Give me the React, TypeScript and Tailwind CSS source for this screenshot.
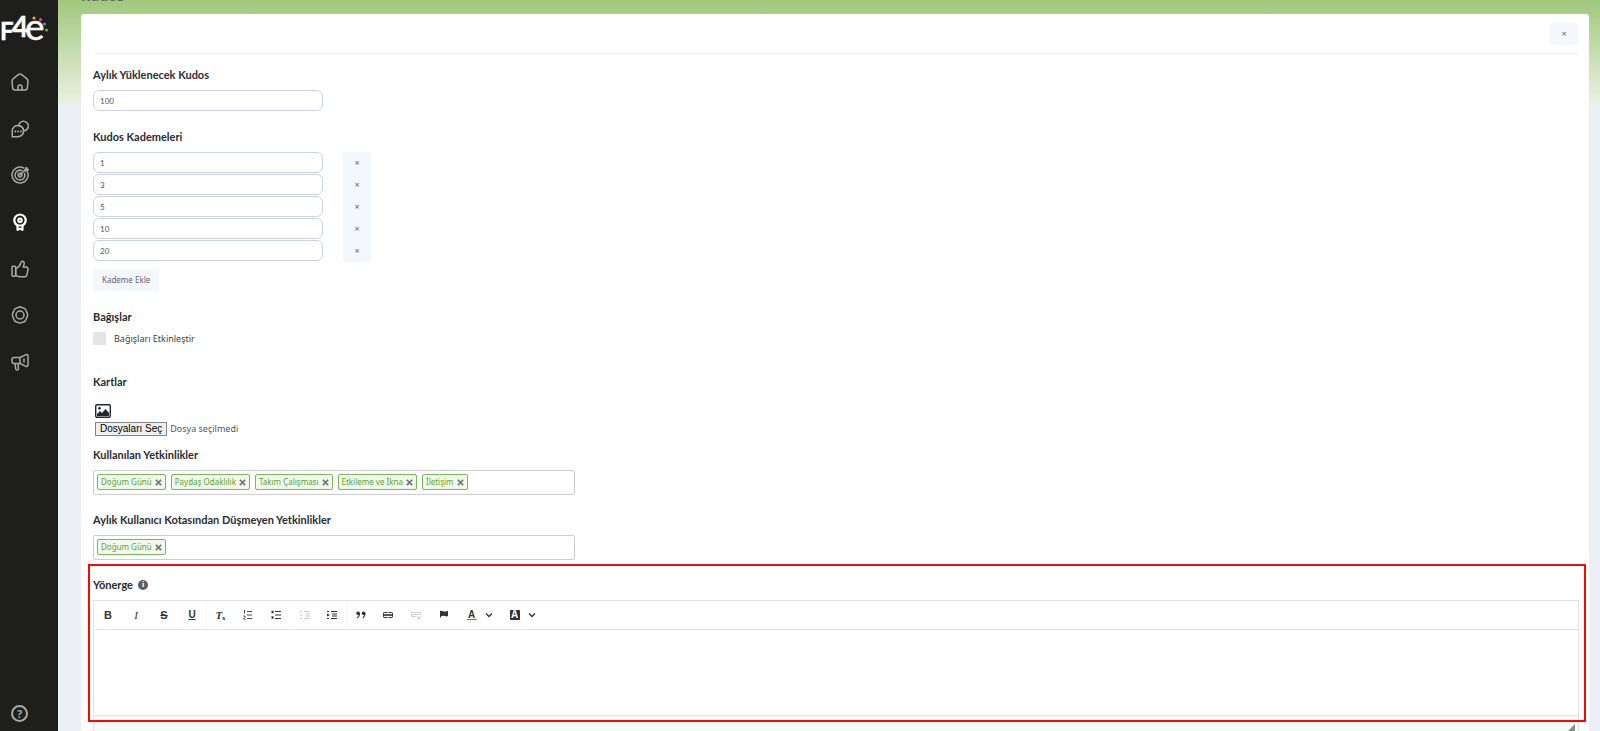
import { useState } from 'react'
import type { ReactNode } from 'react'

type IconProps = { children: ReactNode; className?: string }

function NavIcon({ children }: IconProps) {
  return (
    <svg
      viewBox="0 0 18 18"
      className="size-[18px]"
      fill="none"
      stroke="currentColor"
      strokeWidth="1.5"
      strokeLinecap="round"
      strokeLinejoin="round"
    >
      {children}
    </svg>
  )
}

function ToolIcon({ children, className = '' }: IconProps) {
  return (
    <svg viewBox="0 0 10 10" className={`size-[10px] ${className}`} fill="none" stroke="currentColor" strokeWidth="1">
      {children}
    </svg>
  )
}

const navItems = [
  {
    label: 'Ana Sayfa',
    icon: (
      <>
        <path d="M1 8.200C1 7 1.400 6.300 2.300 5.600L7.300 1.700a2.800 2.800 0 0 1 3.400 0l5 3.900C16.600 6.300 17 7 17 8.200L16.400 14.500A2.500 2.500 0 0 1 14 17H4a2.500 2.500 0 0 1-2.400-2.500Z" />
        <path d="M7 17v-3a2 2 0 0 1 4 0v3" />
      </>
    ),
  },
  {
    label: 'Mesajlar',
    icon: (
      <>
        <path d="M1.200 16.800v-5.300a5.700 5.700 0 1 1 5.700 5.300Z" />
        <path d="M7.800 4.600a4.900 4.900 0 1 1 6.200 6.200L12.800 10.600A5.900 5.900 0 0 0 7.800 5.800" />
        <path d="M4.200 11.500h.1M7 11.500h.1M9.800 11.500h.1" strokeWidth="1.800" />
      </>
    ),
  },
  {
    label: 'Hedefler',
    icon: (
      <>
        <path d="M12.800 2A8 8 0 1 0 16.200 5.500" />
        <path d="M11 4.600A4.900 4.900 0 1 0 13.500 7.200" />
        <path d="M9.600 7.200A1.900 1.900 0 1 0 10.900 8.500M9 9l5-5 1.500-2.500.4 1.600 1.600.4L14.500 5" />
      </>
    ),
  },
  {
    label: 'Kudos',
    active: true,
    icon: (
      <g strokeWidth="2.200">
        <path d="M6.500 12.300A5.700 5.700 0 1 1 11.500 12.300" />
        <circle cx="9" cy="7.200" r="1.700" />
        <path d="M6.500 12.500v4.300L9 15.800l2.500 1v-4.300Z" />
      </g>
    ),
  },
  {
    label: 'Beğeniler',
    icon: (
      <>
        <rect x="1" y="6.300" width="3.700" height="10" rx="1" />
        <path d="M4.700 8.500C7.500 7.500 9 5.500 9.700 3.300c.5-2.300 3-2.700 3.500-.5.200 1.500-.6 3-1 4.200H15c1.500 0 2.200 1 2 2.300l-1 5c-.3 1.500-1 2.500-2.500 2.500H9c-1.500 0-2.500-.5-4.300-1.500Z" />
      </>
    ),
  },
  {
    label: 'Ayarlar',
    icon: (
      <>
        <path d="M7.200 1.500c1-.7 2.600-.7 3.600 0l1.700.6c1.300.2 2.200 1.100 2.500 2.400l.8 1.700c1 1.800 1 3.800 0 5.600L15 13.500c-.3 1.300-1.200 2.200-2.500 2.400l-1.700.6c-1 .7-2.600.7-3.600 0l-1.700-.6C4.200 15.700 3.300 14.800 3 13.500l-.8-1.700c-1-1.800-1-3.800 0-5.600L3 4.500c.3-1.300 1.200-2.200 2.500-2.400Z" />
        <circle cx="9" cy="9" r="4" />
      </>
    ),
  },
  {
    label: 'Duyurular',
    icon: (
      <>
        <path d="M9 4.500H3a2 2 0 0 0-2 2v2a2 2 0 0 0 2 2h6ZM9 4.500l5.500-2.700c1.600-.6 2.500 0 2.500 1.200v9c0 1.200-1 1.700-2.500 1.200L9 10.500" />
        <path d="m4 10.500.7 5.300c.3 1.600 3 1.400 2.800-.4L7 10.500M13 6v3" />
      </>
    ),
  },
]

const levels = ['1', '3', '5', '10', '20']

const toolbar = [
  { label: 'Kalın', icon: <span className="text-[11px] font-black">B</span> },
  { label: 'İtalik', icon: <span className="font-['Liberation_Serif',serif] text-[11px] italic">I</span> },
  { label: 'Üstü Çizgili', icon: <span className="text-[11px] font-bold line-through">S</span> },
  { label: 'Altı Çizgili', icon: <span className="text-[10px] font-bold underline">U</span> },
  {
    label: 'Biçimi Kaldır',
    divider: true,
    icon: (
      <span className="font-['Liberation_Serif',serif] text-[11px] font-bold italic">
        T<sub className="text-[7px] not-italic">x</sub>
      </span>
    ),
  },
  {
    label: 'Numaralı Liste',
    icon: (
      <ToolIcon>
        <path d="M4 1.500h5M4 5h5M4 8.500h5M1.500 0v3.500M.5 6h1.500v1.500L.5 9h2" strokeWidth=".9" />
      </ToolIcon>
    ),
  },
  {
    label: 'Simgeli Liste',
    icon: (
      <ToolIcon>
        <path d="M4 1.500h6M4 5h6M4 8.500h6" />
        <path d="M.5 2h2M.5 7.500h2" strokeWidth="2.500" />
      </ToolIcon>
    ),
  },
  {
    label: 'Girintiyi Azalt',
    divider: true,
    disabled: true,
    icon: (
      <ToolIcon>
        <path d="M0 1.500h2M4 1.500h6M5 4h5M5 6h5M0 8.500h2M4 8.500h6M0 5h3" />
      </ToolIcon>
    ),
  },
  {
    label: 'Girintiyi Artır',
    icon: (
      <ToolIcon>
        <path d="M0 1.500h2M4 1.500h6M5 4h5M5 6h5M0 8.500h2M4 8.500h6" />
        <path d="m0 3.500 3 1.500-3 1.500Z" fill="currentColor" stroke="none" />
      </ToolIcon>
    ),
  },
  {
    label: 'Alıntı',
    divider: true,
    icon: (
      <ToolIcon>
        <path d="M2 3.200h.1M7.500 3.200h.1" strokeWidth="3.600" strokeLinecap="round" />
        <path d="M3.500 3c0 2.500-.7 4-2.200 5M9 3c0 2.500-.7 4-2.200 5" strokeWidth="1.300" />
      </ToolIcon>
    ),
  },
  {
    label: 'Bağlantı',
    icon: (
      <ToolIcon>
        <path d="M4.500 2.500H1.200a.7.7 0 0 0-.7.700v3.600a.7.7 0 0 0 .7.700h3.300M5.500 2.500h3.300a.7.7 0 0 1 .7.700v3.600a.7.7 0 0 1-.7.700H5.500" />
        <path d="M1 5h8" strokeWidth="1.600" />
      </ToolIcon>
    ),
  },
  {
    label: 'Bağlantıyı Kaldır',
    disabled: true,
    icon: (
      <ToolIcon>
        <path d="M4.500 2.500H.5v4h4M5.500 2.500h4v3M2 4.500h6M6.500 6.500l3 3m0-3-3 3" />
      </ToolIcon>
    ),
  },
  {
    label: 'Çapa',
    icon: (
      <ToolIcon>
        <path d="M1 7.500V1c2-1 3 .8 5 .6C7.200 1.500 8 1 9 1v5c-2 1-3-.3-4.500-.3C3.300 5.700 2.500 6 2 6.200v1.300Z" fill="currentColor" stroke="none" />
      </ToolIcon>
    ),
  },
]

function Chevron() {
  return (
    <svg viewBox="0 0 8 8" className="size-2" fill="none" stroke="currentColor" strokeWidth="1.300">
      <path d="m1 2.500 3 3 3-3" />
    </svg>
  )
}

function Heading({ children, htmlFor }: { children: ReactNode; htmlFor?: string }) {
  const className = 'block font-[Lato,sans-serif] text-[11px] leading-4 font-bold text-[#2b2c33]'
  return htmlFor ? (
    <label htmlFor={htmlFor} className={className}>
      {children}
    </label>
  ) : (
    <h2 className={className}>{children}</h2>
  )
}

function TagBox({ id, initial }: { id: string; initial: string[] }) {
  const [tags, setTags] = useState(initial)
  return (
    <div className="flex h-[25px] w-[482px] max-w-full items-start gap-[5px] rounded-xs border border-[#ccc] px-[3px] pt-[3px]">
      {tags.map((tag) => (
        <span
          key={tag}
          className="flex h-4 shrink-0 items-center gap-[3px] rounded-xs border border-[#7db55a] bg-[#f1f8ec] px-[3px] text-[8px] leading-3 text-[#5ba62f]"
        >
          {tag}
          <button
            type="button"
            aria-label={`${tag} kaldır`}
            onClick={() => setTags(tags.filter((t) => t !== tag))}
            className="text-[#777]"
          >
            <svg viewBox="0 0 8 8" className="size-[7px]" stroke="currentColor" strokeWidth="2">
              <path d="m1 1 6 6M7 1 1 7" />
            </svg>
          </button>
        </span>
      ))}
      <input id={id} className="min-w-0 flex-1 text-[8px] outline-none" />
    </div>
  )
}

function Sidebar() {
  return (
    <nav className="flex w-[58px] shrink-0 flex-col bg-[#1e1e1c] text-[#a9a9a8]">
      <a href="#" aria-label="F4e" className="block h-11">
        <svg viewBox="0 0 50 44" className="h-11 w-[50px] overflow-visible">
          <g fill="#fff" fontFamily="Lato" stroke="#fff" strokeWidth=".4">
            <text x="0" y="40" fontSize="24" fontWeight="700">F</text>
            <text x="12" y="37" fontSize="28" fontWeight="700">4</text>
            <text x="25" y="40" fontSize="37">e</text>
          </g>
          <circle cx="34" cy="18" r="1.500" fill="#f5b52e" />
          <circle cx="40.500" cy="19.500" r="1.500" fill="#d5549b" />
          <circle cx="44.500" cy="24" r="1.500" fill="#4c9ad0" />
          <circle cx="46.500" cy="30" r="1.500" fill="#6cb52d" />
        </svg>
      </a>
      <ul className="mt-[29px] flex h-[298px] flex-col justify-between pl-[11px]">
        {navItems.map((item) => (
          <li key={item.label} className="h-[18px]">
            <a href="#" aria-label={item.label} className={item.active ? 'block text-white' : 'block'}>
              <NavIcon>{item.icon}</NavIcon>
            </a>
          </li>
        ))}
      </ul>
      <a
        href="#"
        aria-label="Yardım"
        className="mt-auto mb-[9px] ml-[11px] flex size-[17px] items-center justify-center rounded-full border-2 border-current text-[11px] leading-none font-bold"
      >
        ?
      </a>
    </nav>
  )
}

export default function App() {
  return (
    <div className="flex h-screen overflow-hidden bg-[#ecf0f6] font-['Noto_Sans',sans-serif] text-[#54555f]">
      <Sidebar />
      <div className="relative flex-1 pr-[11px] pl-[23px]">
        <div className="absolute inset-x-0 top-0 h-[104px] bg-linear-to-b from-[#a0c87c] to-[#ecf0e4]" />
        <div className="relative">
          <h1 className="-mt-3 h-[26px] text-[14px] leading-4 font-bold text-[#5e6957]">Kudos</h1>
          <main className="rounded-[3px] bg-white pr-2.5 pb-8 pl-3">
            <header className="mr-px flex h-10 items-center justify-end border-b border-[#f0f1f4]">
              <button type="button" aria-label="Kapat" className="h-[22px] w-7 rounded-xs bg-[#f4f7fb] text-[9px] text-[#5d5f7e]">
                ×
              </button>
            </header>

            <section className="mt-[13px]">
              <Heading htmlFor="monthly">Aylık Yüklenecek Kudos</Heading>
              <input
                id="monthly"
                defaultValue="100"
                className="mt-[7px] block h-[21px] w-[230px] rounded-md border border-[#ccd3e3] px-1.5 font-[Lato,sans-serif] text-[8px]"
              />
            </section>

            <section className="mt-[18px]">
              <Heading>Kudos Kademeleri</Heading>
              <ul className="mt-[7px]">
                {levels.map((level) => (
                  <li key={level} className="flex h-[22px] items-start gap-5">
                    <input
                      aria-label={`Kademe ${level}`}
                      defaultValue={level}
                      className="h-[21px] w-[230px] rounded-md border border-[#ccd3e3] px-1.5 font-[Lato,sans-serif] text-[8px]"
                    />
                    <button type="button" aria-label="Kademeyi sil" className="h-[22px] w-7 bg-[#f4f7fb] text-[9px] text-[#5d5f7e]">
                      ×
                    </button>
                  </li>
                ))}
              </ul>
              <button type="button" className="mt-[7px] h-[22px] rounded-xs bg-[#f4f7fb] px-[9px] text-[8px] text-[#62637c]">
                Kademe Ekle
              </button>
            </section>

            <section className="mt-[18px]">
              <Heading>Bağışlar</Heading>
              <label className="mt-[7px] flex items-center gap-2 text-[9px] leading-[13px] text-[#3f4047]">
                <input type="checkbox" className="size-[13px] appearance-none bg-[#e4e4e4] checked:bg-[#7db55a]" />
                Bağışları Etkinleştir
              </label>
            </section>

            <section className="mt-[29px]">
              <Heading>Kartlar</Heading>
              <div className="mt-3.5 pl-0.5">
                <svg viewBox="0 0 16 14" className="h-3.5 w-4">
                  <rect x=".7" y=".7" width="14.600" height="12.600" rx="1.300" fill="#fff" stroke="#24262e" strokeWidth="1.400" />
                  <circle cx="4.500" cy="4.200" r="1.300" fill="#24262e" />
                  <path d="M2 12V10l3-3 2 2 3.500-4L14 9v3Z" fill="#24262e" />
                </svg>
                <div className="mt-1 flex items-center gap-[3px]">
                  <label
                    htmlFor="files"
                    className="border border-[#858585] bg-[#efefef] px-1 font-['Liberation_Sans',sans-serif] text-[10px] leading-3 text-black"
                  >
                    Dosyaları Seç
                  </label>
                  <input id="files" type="file" multiple className="sr-only" />
                  <span className="text-[9px] leading-3">Dosya seçilmedi</span>
                </div>
              </div>
            </section>

            <section className="mt-[11px]">
              <Heading htmlFor="used">Kullanılan Yetkinlikler</Heading>
              <div className="mt-[7px]">
                <TagBox id="used" initial={['Doğum Günü', 'Paydaş Odaklılık', 'Takım Çalışması', 'Etkileme ve İkna', 'İletişim']} />
              </div>
            </section>

            <section className="mt-[17px]">
              <Heading htmlFor="excluded">Aylık Kullanıcı Kotasından Düşmeyen Yetkinlikler</Heading>
              <div className="mt-[7px]">
                <TagBox id="excluded" initial={['Doğum Günü']} />
              </div>
            </section>

            <section className="relative mt-[17px]">
              <div className="pointer-events-none absolute -top-[13px] -right-[7px] -left-[5px] z-10 h-[158px] border-2 border-[#f00a0a]" />
              <div className="flex items-center gap-[5px]">
                <Heading htmlFor="guide">Yönerge</Heading>
                <span className="flex size-2.5 items-center justify-center rounded-full bg-[#5d5d5f] font-['Liberation_Serif',serif] text-[8px] leading-none font-bold text-white">
                  i
                </span>
              </div>
              <div className="mt-[7px] border border-[#e2e2e2]">
                <div className="flex h-[29px] items-center border-b border-[#e2e2e2] font-['Liberation_Sans',sans-serif] text-[#333]">
                  {toolbar.map((tool) => (
                    <button
                      key={tool.label}
                      type="button"
                      aria-label={tool.label}
                      disabled={tool.disabled}
                      className={`flex h-full w-7 items-center justify-center leading-none disabled:opacity-25 ${
                        tool.divider ? 'border-l border-[#f6f6f6]' : ''
                      }`}
                    >
                      {tool.icon}
                    </button>
                  ))}
                  <button type="button" aria-label="Yazı Rengi" className="flex w-[43px] items-center justify-center gap-2">
                    <span className="w-2.5 border-b border-[#777] text-center text-[10px] leading-[9px] font-bold">A</span>
                    <Chevron />
                  </button>
                  <button type="button" aria-label="Arka Plan Rengi" className="flex w-[43px] items-center justify-center gap-2">
                    <span className="size-2.5 rounded-[1px] bg-[#333] text-center text-[10px] leading-[10px] font-bold text-white">A</span>
                    <Chevron />
                  </button>
                </div>
                <textarea id="guide" className="block h-[85px] w-full resize-none p-2 text-[9px] outline-none" />
                <div className="flex h-5 items-start justify-end border-t border-[#e2e2e2] bg-[#f8f8f8] pt-2 pr-[3px]">
                  <svg viewBox="0 0 8 8" className="size-2 text-[#8a8a8a]">
                    <path d="M8 0v8H0Z" fill="currentColor" />
                  </svg>
                </div>
              </div>
            </section>
          </main>
        </div>
      </div>
    </div>
  )
}
